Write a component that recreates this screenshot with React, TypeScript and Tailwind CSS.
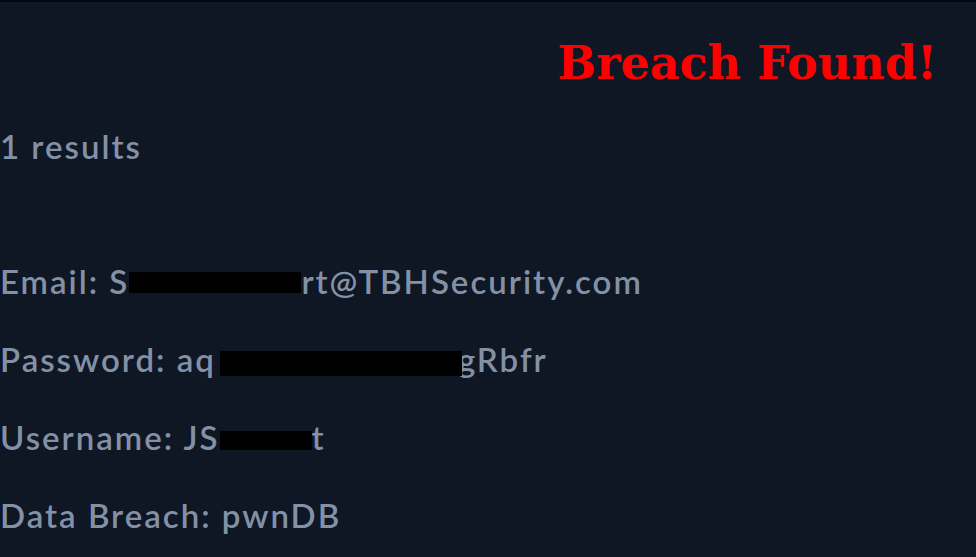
import React from 'react'

const sans = { fontFamily: 'Lato, "Open Sans", sans-serif' }

/* black bar covering the private part of a value */
function Redact({ className }: { className: string }) {
  return <span className={`relative z-10 inline-block bg-black ${className}`} />
}

export default function App() {
  return (
    <div className="min-h-screen w-full overflow-hidden border-t-2 border-[#04070d] bg-[#0f1624]">
      <h1
        className="pt-[18px] pr-[39px] text-right text-[46px] leading-[87px] font-bold text-[#ff0000]"
        style={{ fontFamily: '"DejaVu Serif", serif' }}
      >
        Breach Found!
      </h1>

      <div className="text-[33px] leading-[78px] font-semibold tracking-[2px] text-[#8391a6]" style={sans}>
        <p>1 results</p>

        <div className="mt-[57px]">
          <p className="whitespace-nowrap">
            Email: S
            <Redact className="h-[21px] w-[172px] align-[1px]" />
            rt@TBHSecurity.com
          </p>
          <p className="whitespace-nowrap">
            Password: aq
            <Redact className="ml-[4px] h-[25px] w-[242px] align-[-4px]" />
            <span className="-ml-[4px]">gRbfr</span>
          </p>
          <p className="whitespace-nowrap">
            Username: JS
            <Redact className="h-[19px] w-[92px] align-baseline" />
            t
          </p>
          <p className="whitespace-nowrap">Data Breach: pwnDB</p>
        </div>
      </div>
    </div>
  )
}
